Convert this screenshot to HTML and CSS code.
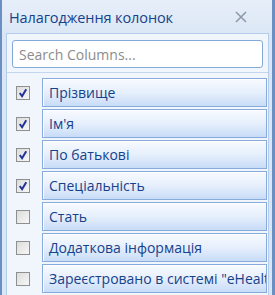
FILE: index.html
```html
<!DOCTYPE html>
<html lang="uk">
<head>
  <meta charset="UTF-8">
  <title>Налагодження колонок</title>
  <link rel="stylesheet" href="styles.css">
</head>
<body>
<div class="window">
  <div class="title">
    <span>Налагодження колонок</span>
    <svg class="close" viewBox="0 0 12 12"><path d="M1 1 L11 11 M11 1 L1 11" /></svg>
  </div>
  <div class="panel">
    <div class="search">
      <input type="text" placeholder="Search Columns...">
    </div>
    <div class="list">
      <div class="row">
        <span class="check on"><svg viewBox="0 0 13 13"><path d="M3 6.5 L5.5 10 L10 2.5" /></svg></span>
        <div class="label">Прізвище</div>
      </div>
      <div class="row">
        <span class="check on"><svg viewBox="0 0 13 13"><path d="M3 6.5 L5.5 10 L10 2.5" /></svg></span>
        <div class="label">Ім'я</div>
      </div>
      <div class="row">
        <span class="check on"><svg viewBox="0 0 13 13"><path d="M3 6.5 L5.5 10 L10 2.5" /></svg></span>
        <div class="label">По батькові</div>
      </div>
      <div class="row">
        <span class="check on"><svg viewBox="0 0 13 13"><path d="M3 6.5 L5.5 10 L10 2.5" /></svg></span>
        <div class="label">Спеціальність</div>
      </div>
      <div class="row">
        <span class="check"></span>
        <div class="label">Стать</div>
      </div>
      <div class="row">
        <span class="check"></span>
        <div class="label">Додаткова інформація</div>
      </div>
      <div class="row">
        <span class="check"></span>
        <div class="label">Зареєстровано в системі "eHealth"</div>
      </div>
    </div>
  </div>
</div>
</body>
</html>
```

FILE: styles.css
```css
* {
  box-sizing: border-box;
}
body {
  margin: 0;
  font-family: "Open Sans", "Noto Sans", sans-serif;
  background: #dfe8f6;
  overflow: hidden;
}
.window {
  width: 275px;
  height: 295px;
  border-left: 2px solid #6a8fc2;
  border-right: 3px solid #6a8fc2;
  background: linear-gradient(#e6eef9, #dae6f5 40px, #dae6f5);
  padding: 0 3px 0 4px;
  overflow: hidden;
}
.title {
  height: 33px;
  display: flex;
  align-items: center;
  justify-content: space-between;
  padding: 1px 22px 0 3px;
  font-size: 14.5px;
  letter-spacing: -0.1px;
  color: #15428b;
}
.close {
  width: 12px;
  height: 12px;
  fill: none;
  stroke: #8d9aac;
  stroke-width: 1.6;
}
.panel {
  border: 1px solid #b5cdec;
  border-bottom: none;
  background: #f1f6fc;
  height: 262px;
}
.search {
  padding: 6px 5px 4px 5px;
  border-bottom: 1px solid #c4d6ef;
}
.search input {
  width: 100%;
  height: 28px;
  border: 1px solid #84a9d8;
  border-radius: 3px;
  padding: 0 6px;
  font-family: inherit;
  font-size: 14px;
  color: #15428b;
  background: #fff;
  outline: none;
}
.search input::placeholder {
  color: #8c8c8c;
}
.list {
  padding: 5px 1px 0 9px;
  display: flex;
  flex-direction: column;
  gap: 2px;
}
.row {
  display: flex;
  align-items: center;
  gap: 12px;
}
.check {
  width: 14px;
  height: 14px;
  flex: none;
  border: 1px solid #8e8f8f;
  background: linear-gradient(135deg, #dcdcdc, #f7f7f7);
  display: flex;
}
.check svg {
  width: 12px;
  height: 12px;
  fill: none;
  stroke: #21339a;
  stroke-width: 2.2;
}
.label {
  flex: 1;
  height: 29px;
  border: 1px solid #86abdc;
  background: linear-gradient(#f8fbff, #e6effc 50%, #c8dcf7);
  box-shadow: inset 1px 1px 0 #fff;
  display: flex;
  align-items: center;
  padding-left: 6px;
  font-size: 14px;
  color: #15428b;
  white-space: nowrap;
  overflow: hidden;
}
```
